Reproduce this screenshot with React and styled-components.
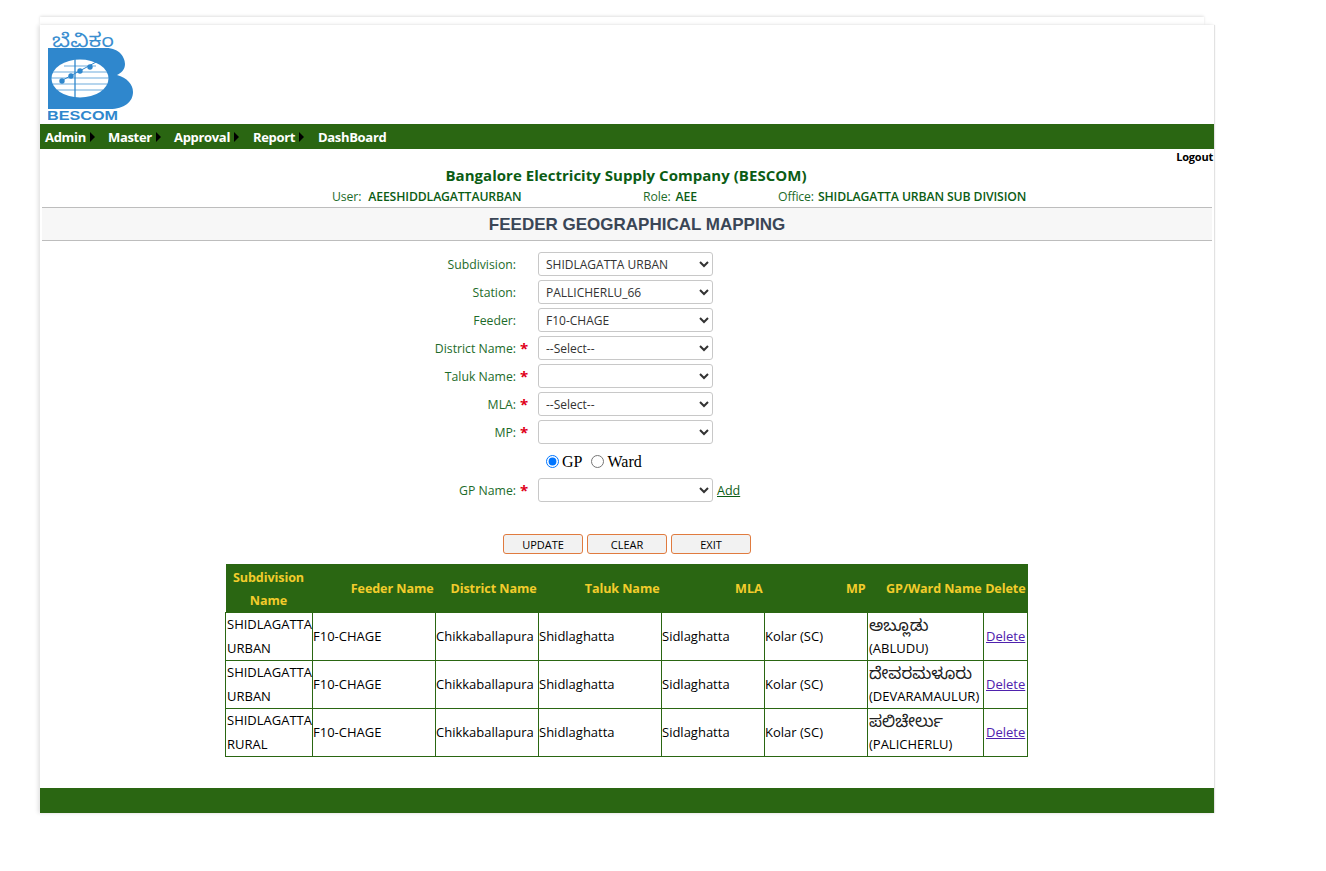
import React from "react";
import styled, { createGlobalStyle } from "styled-components";

const FONT = `"Open Sans", "Noto Sans", "Noto Sans Kannada", sans-serif`;
const GREEN = "#2a6612";

const Global = createGlobalStyle`
  html, body { margin: 0; padding: 0; background: #fff; }
  body { font-family: ${FONT}; }
`;
const Page = styled.div`
  width: 1174px;
  padding: 17px 0 58px 40px;
`;
const TopEdge = styled.div`
  width: 1164px;
  height: 8px;
  background: #fff;
  box-shadow: 0 -1px 3px rgba(0,0,0,.12);
`;
const Card = styled.div`
  position: relative;
  background: #fff;
  height: 788px;
  display: flex;
  flex-direction: column;
  box-shadow: -2px 0 4px rgba(0,0,0,.12), 1px 0 1px rgba(0,0,0,.1);
`;
const LogoBar = styled.div`
  height: 99px;
  padding-left: 8px;
  box-sizing: border-box;
`;
const Nav = styled.nav`
  height: 25px;
  background: ${GREEN};
  display: flex;
  align-items: center;
  padding-left: 5px;
`;
const NavItem = styled.span`
  width: ${p => p.$w}px;
  display: flex;
  align-items: center;
  color: #fff;
  font-size: 13px;
  font-weight: 700;
  letter-spacing: -.32px;
`;
const Arrow = styled.i`
  width: 0; height: 0;
  margin-left: 4px;
  border-left: 5px solid #000;
  border-top: 5px solid transparent;
  border-bottom: 5px solid transparent;
`;
const Logout = styled.div`
  height: 15px;
  text-align: right;
  padding-right: 1px;
  font-size: 11px;
  line-height: 16px;
  font-weight: 700;
  color: #000;
  letter-spacing: -.2px;
`;
const Company = styled.div`
  text-align: center;
  height: 23px;
  line-height: 23px;
  padding-right: 2px;
  font-size: 15px;
  font-weight: 700;
  color: #0b5c14;
  letter-spacing: .03px;
`;
const Info = styled.div`
  display: flex;
  height: 20px;
  line-height: 19px;
  padding-left: 292px;
  font-size: 12.25px;
  color: #1d6b2a;
  letter-spacing: -.13px;
`;
const InfoCell = styled.span`
  width: ${p => p.$w}px;
  white-space: nowrap;
  b { margin-left: ${p => p.$gap}px; color: #0b5c14; font-weight: 600; }
`;
const Heading = styled.h1`
  margin: 0 2px;
  padding-left: 20px;
  height: 32px;
  line-height: 33px;
  background: #f7f7f7;
  border-top: 1px solid #bdbdbd;
  border-bottom: 1px solid #bdbdbd;
  text-align: center;
  font-family: "Liberation Sans", Arial, sans-serif;
  font-size: 17px;
  font-weight: 700;
  color: #3a4656;
`;
const Form = styled.div`
  padding-top: 9px;
  display: flex;
  flex-direction: column;
`;
const Row = styled.div`
  display: grid;
  grid-template-columns: 476px 22px 175px auto;
  align-items: center;
  height: 28px;
`;
const Label = styled.label`
  text-align: right;
  font-size: 12.25px;
  line-height: 24px;
  padding-top: 2px;
  color: #1d6b2a;
`;
const Star = styled.span`
  color: #e0001b;
  font-weight: 700;
  font-size: 15px;
  line-height: 12px;
  padding-left: 4px;
`;
const Select = styled.select`
  box-sizing: border-box;
  width: 175px;
  height: 24px;
  padding: 0 0 0 3px;
  background: #fff;
  border: 1px solid #c8c8c8;
  border-radius: 3px;
  font-family: ${FONT};
  font-size: 12px;
  color: #333;
`;
const AddLink = styled.a`
  margin-left: 4px;
  font-size: 12.5px;
  color: #0b5c14;
  text-decoration: underline;
`;
const RadioRow = styled.div`
  box-sizing: border-box;
  display: flex;
  align-items: center;
  height: 30px;
  padding: 1px 0 0 506px;
  font-family: "Liberation Serif", "Times New Roman", serif;
  font-size: 16px;
  color: #000;
  input { margin: 0 3px 0 0; width: 13px; height: 13px; }
  label { margin-right: 9px; display: flex; align-items: center; }
`;
const Buttons = styled.div`
  display: flex;
  justify-content: center;
  gap: 4px;
  margin-top: 30px;
`;
const Btn = styled.button`
  width: 80px;
  height: 20px;
  padding: 0;
  background: #f2f2f2;
  border: 1px solid #e07b3f;
  border-radius: 3px;
  font-family: ${FONT};
  font-size: 11px;
  color: #000;
`;
const Table = styled.table`
  margin: 10px 0 0 185px;
  width: 803px;
  table-layout: fixed;
  border-collapse: collapse;
  font-size: 13px;
  line-height: 23.5px;
  color: #000;
`;
const Th = styled.th`
  box-sizing: border-box;
  height: 48px;
  background: ${GREEN};
  color: #f2cc2c;
  font-size: 12.6px;
  line-height: 23px;
  font-weight: 700;
  padding: ${p => (p.$center ? 2 : 0)}px 2px 0 1px;
  letter-spacing: -.1px;
  white-space: ${p => (p.$center ? "normal" : "nowrap")};
  text-align: ${p => (p.$center ? "center" : "right")};
`;
const Td = styled.td`
  padding: 0 0 0 ${p => p.$pad || 0}px;
  border: 1px solid ${GREEN};
  white-space: nowrap;
  overflow: visible;
`;
const Kan = styled.span`
  display: block;
  height: 23.5px;
  line-height: 24px;
  font-size: 16.5px;
  color: #222;
`;
const DelLink = styled.a`
  color: #4f22ad;
  text-decoration: underline;
`;
const Footer = styled.div`
  margin-top: auto;
  height: 25px;
  background: ${GREEN};
`;

const Logo = () => (
  <svg width="86" height="98" viewBox="0 -8 86 98" style={{ display: "block" }}>
    <text x="4" y="14" fontFamily={`"Noto Sans Kannada", "Noto Sans", sans-serif`} fontSize="19" textLength="62" lengthAdjust="spacingAndGlyphs" fill="#3a8ed0">ಬೆವಿಕಂ</text>
    <path fill="#2f87cd" d="M0 15 H58 C72 15 77 25 77 31 C77 37 73 40 69 42 C79 45 85 51 85 59 C85 69 76 76 62 76 H0 Z" />
    <ellipse cx="32" cy="45.5" rx="28.5" ry="19" fill="#fff" />
    <g stroke="#2f87cd" strokeWidth="0.7" fill="none">
      <path d="M4 39 H60 M3 45 H61 M5 51 H59 M9 57 H55 M16 33 H48" />
      <path d="M27 26 V65" strokeWidth="1.3" />
      <path d="M13 48 L50 28" strokeWidth="1" />
    </g>
    <g fill="#2f87cd">
      <circle cx="14" cy="48" r="2.7" />
      <circle cx="23" cy="43" r="2.7" />
      <circle cx="32" cy="38" r="2.7" />
      <circle cx="42" cy="34" r="2.7" />
    </g>
    <text x="-1" y="87" fontFamily={`"Liberation Sans", sans-serif`} fontWeight="700" fontSize="13" textLength="71" lengthAdjust="spacingAndGlyphs" fill="#2f87cd">BESCOM</text>
  </svg>
);

const fields = [
  ["Subdivision:", false, ["SHIDLAGATTA URBAN"]],
  ["Station:", false, ["PALLICHERLU_66"]],
  ["Feeder:", false, ["F10-CHAGE"]],
  ["District Name:", true, ["--Select--"]],
  ["Taluk Name:", true, [""]],
  ["MLA:", true, ["--Select--"]],
  ["MP:", true, [""]],
];
const navs = [["Admin", 63], ["Master", 66], ["Approval", 79], ["Report", 65], ["DashBoard", 80]];
const cols = [87, 123, 103, 123, 103, 103, 116, 44];
const heads = ["Subdivision Name", "Feeder Name", "District Name", "Taluk Name", "MLA", "MP", "GP/Ward Name", "Delete"];
const rows = [
  ["SHIDLAGATTA", "URBAN", "ಅಬ್ಲೂಡು", "(ABLUDU)"],
  ["SHIDLAGATTA", "URBAN", "ದೇವರಮಳೂರು", "(DEVARAMAULUR)"],
  ["SHIDLAGATTA", "RURAL", "ಪಲಿಚೇರ್ಲು", "(PALICHERLU)"],
];

const FieldRow = ({ label, star, options, children }) => (
  <Row>
    <Label>{label}</Label>
    <span>{star && <Star>*</Star>}</span>
    <Select defaultValue={options[0]}>{options.map(o => <option key={o}>{o}</option>)}</Select>
    {children}
  </Row>
);

export default function App() {
  return (
    <Page>
      <Global />
      <TopEdge />
      <Card>
        <LogoBar><Logo /></LogoBar>
        <Nav>
          {navs.map(([n, w], i) => (
            <NavItem key={n} $w={w}>{n}{i < 4 && <Arrow />}</NavItem>
          ))}
        </Nav>
        <Logout>Logout</Logout>
        <Company>Bangalore Electricity Supply Company (BESCOM)</Company>
        <Info>
          <InfoCell $w={311} $gap={7}>User:<b>AEESHIDDLAGATTAURBAN</b></InfoCell>
          <InfoCell $w={135} $gap={5}>Role:<b>AEE</b></InfoCell>
          <InfoCell $w={260} $gap={4}>Office:<b>SHIDLAGATTA URBAN SUB DIVISION</b></InfoCell>
        </Info>
        <Heading>FEEDER GEOGRAPHICAL MAPPING</Heading>
        <Form>
          {fields.map(([l, s, o]) => <FieldRow key={l} label={l} star={s} options={o} />)}
          <RadioRow>
            <label><input type="radio" name="t" defaultChecked />GP</label>
            <label><input type="radio" name="t" />Ward</label>
          </RadioRow>
          <FieldRow label="GP Name:" star options={[""]}><AddLink href="#">Add</AddLink></FieldRow>
          <Buttons>
            <Btn>UPDATE</Btn><Btn>CLEAR</Btn><Btn>EXIT</Btn>
          </Buttons>
        </Form>
        <Table>
          <colgroup>{cols.map((w, i) => <col key={i} style={{ width: w }} />)}</colgroup>
          <thead>
            <tr>{heads.map((h, i) => <Th key={h} $center={i === 0}>{h}</Th>)}</tr>
          </thead>
          <tbody>
            {rows.map((r, i) => (
              <tr key={i}>
                <Td $pad={1}>{r[0]}<br />{r[1]}</Td>
                <Td>F10-CHAGE</Td>
                <Td>Chikkaballapura</Td>
                <Td>Shidlaghatta</Td>
                <Td>Sidlaghatta</Td>
                <Td>Kolar (SC)</Td>
                <Td $pad={1}><Kan>{r[2]}</Kan>{r[3]}</Td>
                <Td $pad={2}><DelLink href="#">Delete</DelLink></Td>
              </tr>
            ))}
          </tbody>
        </Table>
        <Footer />
      </Card>
    </Page>
  );
}
